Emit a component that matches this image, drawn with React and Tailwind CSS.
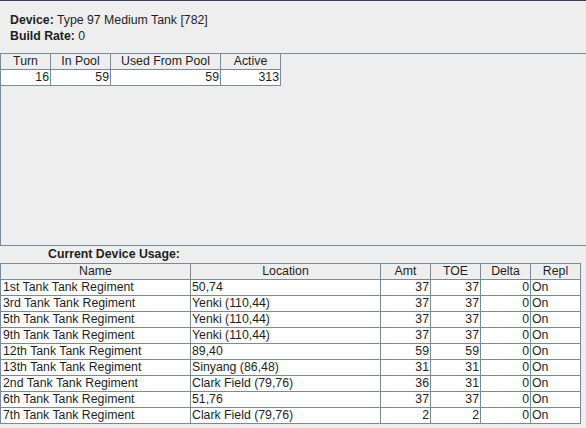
import React from 'react'

const poolCols = [
    { label: 'Turn', w: 'w-[50px]', value: '16' },
    { label: 'In Pool', w: 'w-[60px]', value: '59' },
    { label: 'Used From Pool', w: 'w-[110px]', value: '59' },
    { label: 'Active', w: 'w-[60px]', value: '313' },
]

const usageCols = [
    { label: 'Name', w: 'w-[190px]', align: 'text-left pl-[2px]' },
    { label: 'Location', w: 'w-[190px]', align: 'text-left pl-px' },
    { label: 'Amt', w: 'w-[50px]', align: 'text-right pr-px' },
    { label: 'TOE', w: 'w-[50px]', align: 'text-right pr-px' },
    { label: 'Delta', w: 'w-[50px]', align: 'text-right pr-px' },
    { label: 'Repl', w: 'w-[50px]', align: 'text-left pl-px' },
]

const units = [
    ['1st Tank Tank Regiment', '50,74', '37', '37', '0', 'On'],
    ['3rd Tank Tank Regiment', 'Yenki (110,44)', '37', '37', '0', 'On'],
    ['5th Tank Tank Regiment', 'Yenki (110,44)', '37', '37', '0', 'On'],
    ['9th Tank Tank Regiment', 'Yenki (110,44)', '37', '37', '0', 'On'],
    ['12th Tank Tank Regiment', '89,40', '59', '59', '0', 'On'],
    ['13th Tank Tank Regiment', 'Sinyang (86,48)', '31', '31', '0', 'On'],
    ['2nd Tank Tank Regiment', 'Clark Field (79,76)', '36', '31', '0', 'On'],
    ['6th Tank Tank Regiment', '51,76', '37', '37', '0', 'On'],
    ['7th Tank Tank Regiment', 'Clark Field (79,76)', '2', '2', '0', 'On'],
]

export default function App() {
    return (
        <div className="w-[586px] h-[428px] overflow-hidden bg-[#eeeeee] text-[#1e1e1e] text-[12.3px] leading-[15px] font-['Liberation_Sans',Arial,sans-serif]">
            {/* window top edge */}
            <div className="h-px bg-[#39405a]" />

            {/* Device info */}
            <div className="pt-[11px] pl-[10px] pb-[9px] leading-[16px]">
                <div><span className="font-bold">Device:</span> Type 97 Medium Tank [782]</div>
                <div><span className="font-bold">Build Rate:</span> 0</div>
            </div>

            {/* Pool panel */}
            <div className="h-[193px] border-t border-b border-l border-[#7a8a99]">
                <div className="flex border-b border-[#7a8a99] w-fit">
                    {poolCols.map((c) => (
                        <div key={c.label} className={`${c.w} h-[15px] border-r border-[#7a8a99] text-center`}>
                            {c.label}
                        </div>
                    ))}
                </div>
                <div className="flex w-fit bg-white border-b border-[#7a8a99]">
                    {poolCols.map((c) => (
                        <div key={c.label} className={`${c.w} h-[15px] border-r border-[#7a8a99] text-right pr-px`}>
                            {c.value}
                        </div>
                    ))}
                </div>
            </div>

            {/* Usage label */}
            <div className="h-[17px] pl-[48px] pt-px font-bold">Current Device Usage:</div>

            {/* Usage table */}
            <div className="border-t border-l border-[#7a8a99] w-[581px]">
                <div className="flex border-b border-[#7a8a99]">
                    {usageCols.map((c) => (
                        <div key={c.label} className={`${c.w} h-[15px] border-r border-[#7a8a99] text-center`}>
                            {c.label}
                        </div>
                    ))}
                </div>
                {units.map((row, i) => (
                    <div key={i} className="flex bg-white border-b border-[#7a8a99]">
                        {row.map((cell, j) => (
                            <div
                                key={j}
                                className={`${usageCols[j].w} ${usageCols[j].align} h-[15px] border-r border-[#7a8a99] whitespace-nowrap overflow-hidden`}
                            >
                                {cell}
                            </div>
                        ))}
                    </div>
                ))}
            </div>
        </div>
    )
}
